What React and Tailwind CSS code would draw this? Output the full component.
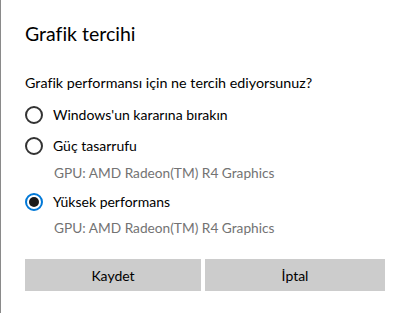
import React, { useState } from "react";

function Radio({ checked, label, onSelect }) {
  return (
    <button
      type="button"
      onClick={onSelect}
      className="flex h-[20px] items-center text-left"
    >
      <span
        className={
          checked
            ? "flex h-[18px] w-[18px] items-center justify-center rounded-full border-2 border-[#0078d7]"
            : "flex h-[18px] w-[18px] items-center justify-center rounded-full border-2 border-[#333333]"
        }
      >
        {checked ? <span className="h-[10px] w-[10px] rounded-full bg-[#1a1a1a]" /> : null}
      </span>
      <span className="ml-[10px] text-[14px] leading-[20px] text-[#000000]">{label}</span>
    </button>
  );
}

export default function App() {
  const [choice, setChoice] = useState(2);
  return (
    <div className="h-[313px] w-[406px] border-l border-[#8a8a8a] bg-white font-['Lato',sans-serif] [font-variant-ligatures:none]">
      <div className="flex flex-col pl-[24px] pt-[22px]">
        <h1 className="text-[19.5px] leading-[24px] font-normal text-[#000000]">Grafik tercihi</h1>
        <p className="mt-[27px] text-[14.3px] leading-[20px] text-[#000000]">
          Grafik performansı için ne tercih ediyorsunuz?
        </p>
        <div className="mt-[12px]">
          <Radio checked={choice === 0} label="Windows'un kararına bırakın" onSelect={() => setChoice(0)} />
        </div>
        <div className="mt-[11px]">
          <Radio checked={choice === 1} label="Güç tasarrufu" onSelect={() => setChoice(1)} />
        </div>
        <p className="mt-[7px] pl-[29px] text-[13.7px] leading-[20px] text-[#737373]">
          GPU: AMD Radeon(TM) R4 Graphics
        </p>
        <div className="mt-[9px]">
          <Radio checked={choice === 2} label="Yüksek performans" onSelect={() => setChoice(2)} />
        </div>
        <p className="mt-[6px] pl-[29px] text-[13.7px] leading-[20px] text-[#737373]">
          GPU: AMD Radeon(TM) R4 Graphics
        </p>
        <div className="mt-[21px] flex gap-[4px]">
          <button type="button" className="h-[32px] w-[176px] bg-[#cccccc] text-[14px] text-[#000000]">
            Kaydet
          </button>
          <button type="button" className="h-[32px] w-[180px] bg-[#cccccc] text-[14px] text-[#000000]">
            İptal
          </button>
        </div>
      </div>
    </div>
  );
}
